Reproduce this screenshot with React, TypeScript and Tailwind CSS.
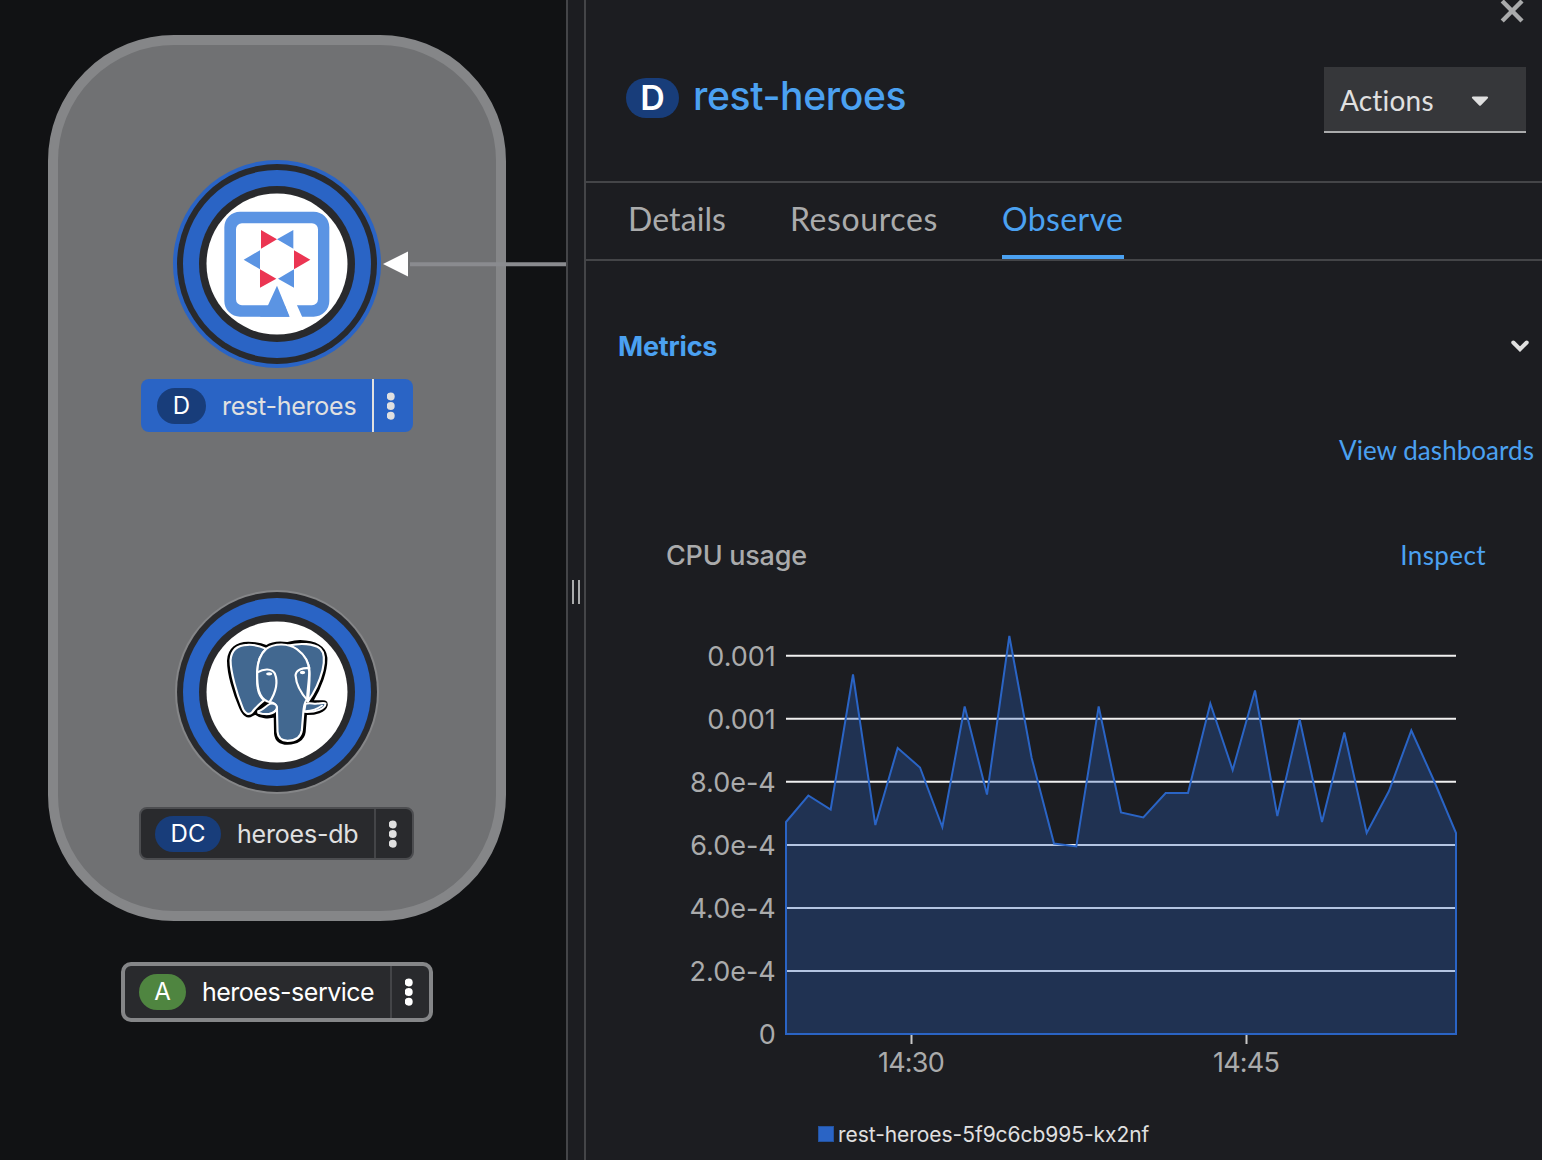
import React from "react";
import { FaCaretDown } from "react-icons/fa";

const LATO = "font-['Lato','Liberation_Sans',sans-serif]";

function Kebab() {
  return (
    <svg width="8" height="28" viewBox="0 0 8 28" fill="currentColor">
      <circle cx="3.7" cy="4.4" r="4" />
      <circle cx="3.7" cy="14" r="4" />
      <circle cx="3.7" cy="23.7" r="4" />
    </svg>
  );
}

type NodeLabelProps = {
  box: string;
  badge: string;
  kind: string;
  text: string;
  textClass: string;
  menu: string;
};

function NodeLabel({ box, badge, kind, text, textClass, menu }: NodeLabelProps) {
  return (
    <div className={`absolute flex items-center ${box}`}>
      <span className={`flex h-9 shrink-0 items-center justify-center rounded-[18px] text-[24px] leading-none text-white ${badge}`}>
        {kind}
      </span>
      <span className={`grow whitespace-nowrap text-[25px] leading-none ${textClass}`}>{text}</span>
      <span className={`flex shrink-0 items-center self-stretch border-l-2 ${menu}`}>
        <Kebab />
      </span>
    </div>
  );
}

function QuarkusLogo() {
  return (
    <g transform="translate(160 150.3) scale(0.33333)">
      <path
        fillRule="evenodd"
        fill="#5b94e3"
        d="M240 184H461A47 47 0 0 1 508 231V452A47 47 0 0 1 461 499H240A47 47 0 0 1 193 452V231A47 47 0 0 1 240 184ZM246 219A18 18 0 0 0 228 237V447A18 18 0 0 0 246 465H456A18 18 0 0 0 474 447V237A18 18 0 0 0 456 219Z"
      />
      <path fill="#fff" d="M365 440L400 440L427 501L388 501Z" />
      <path fill="#5b94e3" d="M351 406L389 499H300L324 465Z" />
      <path fill="#eb3552" d="M303 239L351 267L303 295ZM402 300L451 328L402 357ZM300 357L349 385L300 412Z" />
      <path fill="#5b94e3" d="M400 239L351 267L400 295ZM300 300L251 328L300 357ZM402 357L354 385L402 412Z" />
    </g>
  );
}

function PostgresLogo() {
  return (
    <g transform="translate(160.2 580.2) scale(0.33333)" strokeLinejoin="round" strokeLinecap="round">
      <path
        fill="#000"
        stroke="#000"
        strokeWidth="7"
        d="M319 198C303 190 284 188 264 188C229 188 206 206 204 240C203 280 222 341 240 382C250 405 262 413 275 405L286 400C300 412 325 414 344 408L345 460C347 480 360 490 382 490C410 490 430 478 433 455L437 401C465 402 495 394 499 375C501 362 490 363 478 364L455 364C480 325 500 270 498 232C495 200 465 184 420 183C400 184 390 187 380 189C355 185 335 188 319 198Z"
      />
      <g fill="#426890" stroke="#fff" strokeWidth="6.5">
        <path d="M318 206C297 196 276 193 262 194C232 195 213 210 211 240C211 277 230 340 246 380C253 401 266 406 276 396C285 382 300 370 312 360C290 345 290 310 291 275C292 245 300 222 318 206Z" />
        <path d="M385 196C420 188 460 190 480 205C495 220 493 245 487 270C478 305 460 340 443 364C446 335 450 290 447 262C440 235 420 210 385 196Z" />
        <path d="M318 206C345 187 385 190 410 207C435 225 447 250 447 275C447 305 441 330 441 358C432 366 432 376 430 390L425 450C422 472 405 482 382 482C360 481 353 470 352 455L350 380C345 368 335 367 322 364C295 352 290 320 291 275C292 245 300 222 318 206Z" />
      </g>
      <path fill="#000" d="M296 383C302 374 310 367 320 369L324 372C314 377 308 382 301 388Z" />
      <g fill="#426890" stroke="#fff" strokeWidth="6">
        <path d="M294 393C308 390 318 376 329 371C340 367 350 374 350 382C348 396 330 409 294 398Z" />
        <path d="M436 371C448 366 460 372 472 370C484 369 492 366 496 370C496 385 468 397 432 395Z" />
      </g>
      <path d="M298 399C318 403 336 401 346 390M436 393C456 392 472 386 486 376" fill="none" stroke="#fff" strokeWidth="5" />
      <g fill="none" stroke="#fff" strokeWidth="6.5">
        <path d="M293 276C310 265 335 264 344 280C352 300 354 325 328 366" />
        <path d="M447 264C430 262 408 267 406 285C408 315 425 342 443 362" />
      </g>
      <ellipse cx="327" cy="281" rx="9" ry="5" fill="#fff" />
      <ellipse cx="427" cy="277" rx="8" ry="5" fill="#fff" />
    </g>
  );
}

function NodeRings({ cy, outer, color }: { cy: number; outer: number; color: string }) {
  return (
    <g>
      <circle cx="277" cy={cy} r={outer} fill={color} />
      <circle cx="277" cy={cy} r="100" fill="#292a2d" />
      <circle cx="277" cy={cy} r="94" fill="#2a64c5" />
      <circle cx="277" cy={cy} r="78" fill="#292a2d" />
      <circle cx="277" cy={cy} r="70.5" fill="#fff" />
    </g>
  );
}

function Topology() {
  return (
    <section className="relative h-full w-[566px] shrink-0 overflow-hidden bg-[#111214]">
      <svg className="absolute inset-0" width="566" height="1160" viewBox="0 0 566 1160">
        <rect x="53" y="40" width="448" height="876" rx="121" fill="#707173" stroke="#858688" strokeWidth="10" />
        <path d="M410 264.3H566" stroke="#8a8b8f" strokeWidth="4" />
        <path d="M383 264L408 251.5V276.5Z" fill="#fff" />
        <NodeRings cy={264} outer={104} color="#2a64c5" />
        <NodeRings cy={692} outer={102} color="#858688" />
        <QuarkusLogo />
        <PostgresLogo />
      </svg>
      <NodeLabel
        box="left-[141px] top-[379px] h-[53px] w-[272px] rounded-lg bg-[#2a64c5] pl-4"
        badge="w-[49px] bg-[#183d7a]"
        kind="D"
        text="rest-heroes"
        textClass="pl-4 pt-0.5 tracking-[-0.25px] text-[#e0e0e0]"
        menu="w-[41px] border-[#e0e0e0] pl-[13px] text-[#e0e0e0]"
      />
      <NodeLabel
        box="left-[139px] top-[807px] h-[53px] w-[275px] rounded-lg border-2 border-[#4c4d50] bg-[#292a2d] pl-3.5"
        badge="w-[66px] bg-[#183d7a]"
        kind="DC"
        text="heroes-db"
        textClass="pl-4 pt-0.5 tracking-[-0.2px] text-[#e0e0e0]"
        menu="w-[38px] border-[#444548] pl-[13px] text-[#e0e0e0]"
      />
      <NodeLabel
        box="left-[121px] top-[962px] h-[60px] w-[312px] rounded-[10px] border-4 border-[#858688] bg-[#292a2d] pl-3.5"
        badge="w-[47px] bg-[#4f8540]"
        kind="A"
        text="heroes-service"
        textClass="pl-4 tracking-[-0.5px] text-white"
        menu="w-[39px] border-[#444548] pl-[13px] text-white"
      />
    </section>
  );
}

const USAGE = [
  822, 795.5, 809.5, 674.5, 825, 748, 767.5, 827, 706.5, 794.5, 636, 758, 843.5, 846.5, 706.5, 812.5, 817.5, 793, 793,
  703.5, 770, 690.5, 816, 719.5, 822, 732.5, 833, 791, 730.5, 780, 833,
];
const GRID: [number, string][] = [
  [655.8, "0.001"],
  [718.8, "0.001"],
  [781.8, "8.0e-4"],
  [844.9, "6.0e-4"],
  [907.9, "4.0e-4"],
  [970.9, "2.0e-4"],
  [1034, "0"],
];

function CpuChart() {
  const line = USAGE.map((y, i) => `${(786 + (i * 670) / 30).toFixed(2)} ${y}`).join("L");
  return (
    <svg className="block shrink-0" width="956" height="540" viewBox="586 620 956 540" fontSize="27" fill="#aaabac">
      {GRID.map(([y, label], i) => (
        <g key={i}>
          {i < 6 && <path d={`M786 ${y}H1456`} stroke="#f0f0f0" strokeWidth="2" />}
          <text x="775.8" y={y + 10} textAnchor="end">{label}</text>
        </g>
      ))}
      <path d={`M${line}L1456 1034H786Z`} fill="#2a64c5" fillOpacity="0.3" stroke="#2a64c5" strokeWidth="2" />
      <path d="M911.5 1035V1044M1246.5 1035V1044" stroke="#c8c8c8" strokeWidth="2" />
      <text x="911" y="1072" textAnchor="middle" letterSpacing="-0.8">14:30</text>
      <text x="1246" y="1072" textAnchor="middle" letterSpacing="-0.8">14:45</text>
      <rect x="818.5" y="1126.5" width="15" height="15" fill="#2a64c5" stroke="#24539f" />
      <text x="838" y="1142" fontSize="21" letterSpacing="-0.05" fill="#e0e0e0">rest-heroes-5f9c6cb995-kx2nf</text>
    </svg>
  );
}

function DetailsPanel() {
  return (
    <aside className="flex h-full min-w-0 grow flex-col border-l-2 border-[#444548]">
      <header className="flex h-[183px] shrink-0 items-start border-b-2 border-[#444548] pl-10">
        <span className="mt-[78px] flex h-10 w-[53px] items-center justify-center rounded-full bg-[#183d7a] text-[34px] font-semibold leading-none text-white">
          D
        </span>
        <h1 className="ml-3.5 mt-[73px] text-[39px] font-medium leading-[46px] tracking-[-0.35px] text-[#4ba1f1]">rest-heroes</h1>
        <div className="ml-auto mr-4 flex flex-col items-end">
          <svg width="28" height="25" viewBox="0 0 28 25" fill="none" stroke="#aaabac" strokeWidth="4.4">
            <path d="M4.2 1L24 21M24 1L4.2 21" />
          </svg>
          <button className={`mt-[42px] flex h-[66px] w-[202px] items-center border-b-2 border-[#aaabac] bg-[#36373a] pl-4 pt-0.5 text-[28px] tracking-[0.2px] text-[#e0e0e0] ${LATO}`}>
            Actions
            <FaCaretDown className="ml-8 size-7" />
          </button>
        </div>
      </header>
      <nav className={`flex h-[78px] shrink-0 gap-16 border-b-2 border-[#444548] pl-[42px] text-[32px] leading-[72px] text-[#aaabac] ${LATO}`}>
        <span className="w-[98px] tracking-[0.1px]">Details</span>
        <span className="w-[148px] tracking-[0.6px]">Resources</span>
        <span className="w-[122px] border-b-4 border-[#4ba1f1] tracking-[0.4px] text-[#4ba1f1]">Observe</span>
      </nav>
      <div className="mt-[66px] flex h-10 shrink-0 items-center justify-between pl-8 pr-[13px]">
        <h2 className="text-[27px] font-bold tracking-[-0.2px] text-[#4ba1f1]">Metrics</h2>
        <svg className="mb-0.5" width="18" height="12" viewBox="0 0 18 12" fill="none" stroke="#e0e0e0" strokeWidth="4" strokeLinecap="round">
          <path d="M2.3 2.5L9 9.2L15.7 2.5" />
        </svg>
      </div>
      <div className={`mt-[63px] flex h-10 shrink-0 items-center justify-end pr-2 text-[26px] tracking-[0.05px] text-[#4ba1f1] ${LATO}`}>
        View dashboards
      </div>
      <div className="mb-[45px] mt-[65px] flex h-10 shrink-0 items-center justify-between pl-20 pr-14">
        <h3 className="pt-0.5 text-[27px] font-medium tracking-[-0.25px] text-[#aaabac]">CPU usage</h3>
        <span className={`text-[26px] tracking-[0.4px] text-[#4ba1f1] ${LATO}`}>Inspect</span>
      </div>
      <CpuChart />
    </aside>
  );
}

export default function App() {
  return (
    <main className="flex h-[1160px] w-[1542px] overflow-hidden bg-[#1c1d21] font-['Inter','Liberation_Sans',sans-serif]">
      <Topology />
      <div className="flex w-[18px] shrink-0 gap-1 border-l-2 border-[#444548] pl-1 pt-[580px]">
        <span className="h-6 w-0.5 bg-[#aaabac]" />
        <span className="h-6 w-0.5 bg-[#aaabac]" />
      </div>
      <DetailsPanel />
    </main>
  );
}
